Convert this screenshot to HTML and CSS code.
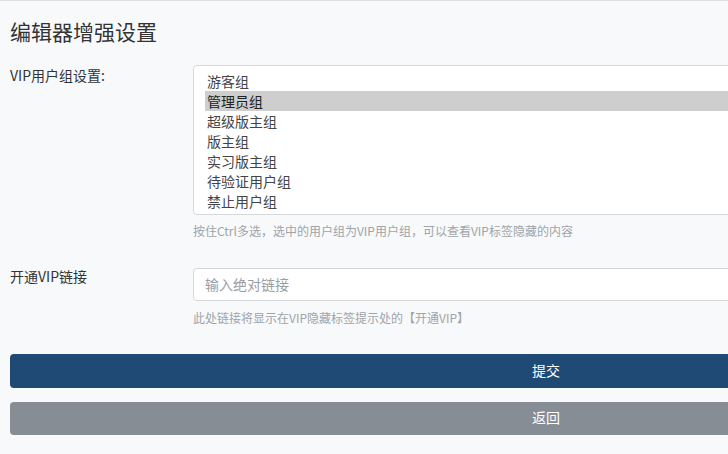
FILE: index.html
```html
<!DOCTYPE html>
<html lang="zh-CN">
<head>
<meta charset="utf-8">
<title>编辑器增强设置</title>
<link rel="stylesheet" href="styles.css">
</head>
<body>
<div class="page">
  <h1 class="title">编辑器增强设置</h1>
  <form class="form">
    <div class="row">
      <label class="label">VIP用户组设置:</label>
      <div class="field">
        <div class="listbox" role="listbox" aria-multiselectable="true">
          <div class="option" role="option">游客组</div>
          <div class="option selected" role="option" aria-selected="true">管理员组</div>
          <div class="option" role="option">超级版主组</div>
          <div class="option" role="option">版主组</div>
          <div class="option" role="option">实习版主组</div>
          <div class="option" role="option">待验证用户组</div>
          <div class="option" role="option">禁止用户组</div>
        </div>
        <div class="help">按住Ctrl多选，选中的用户组为VIP用户组，可以查看VIP标签隐藏的内容</div>
      </div>
    </div>
    <div class="row row-link">
      <label class="label label-link">开通VIP链接</label>
      <div class="field">
        <input class="input" type="text" placeholder="输入绝对链接">
        <div class="help help-link">此处链接将显示在VIP隐藏标签提示处的【开通VIP】</div>
      </div>
    </div>
    <div class="actions">
      <button type="button" class="btn btn-primary">提交</button>
      <button type="button" class="btn btn-secondary">返回</button>
    </div>
  </form>
</div>
</body>
</html>
```
FILE: styles.css
```css
html, body {
  margin: 0;
  padding: 0;
  overflow: hidden;
}
body {
  background: #f7f9fb;
  border-top: 1px solid #dcdfe3;
  font-family: "Noto Sans CJK SC", "Noto Sans", sans-serif;
  color: #333;
  font-size: 14px;
}
.page {
  width: 1072px;
  padding-left: 10px;
}
.title {
  margin: 15px 0 0;
  font-size: 21px;
  line-height: 30px;
  font-weight: 400;
  color: #333;
}
.form {
  margin-top: 19px;
}
.row {
  display: flex;
}
.row-link {
  margin-top: 29px;
}
.label {
  width: 183px;
  flex: none;
  line-height: 20px;
  font-size: 14px;
  color: #333;
}
.label-link {
  margin-top: -2px;
}
.field {
  flex: 1;
  min-width: 0;
}
.listbox {
  box-sizing: border-box;
  height: 150px;
  background: #fff;
  border: 1px solid #d6d8db;
  border-radius: 4px;
  padding: 5px 0 0 11px;
}
.option {
  line-height: 20px;
  padding: 0 2px;
  color: #444;
  white-space: nowrap;
}
.option.selected {
  background: #cecece;
  color: #222;
}
.help {
  margin-top: 7px;
  font-size: 12px;
  line-height: 17px;
  color: #a0a4a8;
}
.help-link {
  margin-top: 8px;
}
.input {
  display: block;
  box-sizing: border-box;
  width: 100%;
  height: 33px;
  margin: 0;
  padding: 0 11px 1px;
  background: #fff;
  border: 1px solid #d6d8db;
  border-radius: 4px;
  font-family: inherit;
  font-size: 14px;
  color: #333;
  outline: none;
}
.input::placeholder {
  color: #9a9ea3;
}
.actions {
  margin-top: 28px;
  display: flex;
  flex-direction: column;
  gap: 14px;
}
.btn {
  display: block;
  width: 100%;
  height: 34px;
  border: 0;
  border-radius: 4px;
  color: #fff;
  font-family: inherit;
  font-size: 14px;
  padding: 0 0 3px;
  cursor: pointer;
}
.btn-primary {
  background: #1f4a75;
}
.btn-secondary {
  background: #878d95;
  height: 33px;
}
```
